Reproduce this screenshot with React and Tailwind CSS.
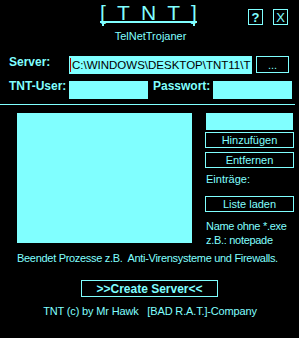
import React from 'react'

const cyan = 'bg-[#80ffff]'

function Btn({ children, className = '' }) {
  return (
    <div className={`border border-[#80ffff] flex items-center justify-center text-[11px] leading-[12px] text-[#80ffff] ${className}`}>
      {children}
    </div>
  )
}

function App() {
  return (
    <div className="w-[299px] h-[338px] bg-black text-[#80ffff] font-['Liberation_Sans',Arial,sans-serif] overflow-hidden">
      {/* Header */}
      <div className="grid grid-cols-[100px_97px_1fr] h-[30px]">
        <div />
        <div className="pt-[4px]">
          <div className="flex justify-between h-[17px] text-[21px] leading-[17px] border-b-2 border-[#80ffff] box-content">
            <span>[</span>
            <span>T</span>
            <span>N</span>
            <span>T</span>
            <span>]</span>
          </div>
          <div className="h-[3px] border-x-2 border-[#80ffff] mx-[2px]" />
        </div>
        <div className="flex justify-end gap-[10px] pr-[11px] pt-[9px]">
          <div className="w-[15px] h-[16px] border border-[#80ffff] flex items-center justify-center text-[13px] leading-none font-bold">?</div>
          <div className="w-[15px] h-[16px] border border-[#80ffff] flex items-center justify-center text-[13px] leading-none">X</div>
        </div>
      </div>

      <div className="text-center text-[11px] leading-[12px] pl-[2px]">TelNetTrojaner</div>

      {/* Server row */}
      <div className="flex items-start mt-[14px] h-[18px] pl-[9px]">
        <div className="w-[60px] text-[12px] leading-[12px] font-bold">Server:</div>
        <div className={`w-[183px] h-[18px] ${cyan} flex items-center overflow-hidden whitespace-nowrap text-black text-[11.5px] leading-[14px]`}>
          <span className="w-px h-[14px] bg-[#b00000] ml-[1px] shrink-0" />
          <span className="ml-[1px]">C:\WINDOWS\DESKTOP\TNT11\T</span>
        </div>
        <Btn className="ml-[4px] w-[33px] h-[17px]">...</Btn>
      </div>

      {/* User row */}
      <div className="flex items-start mt-[7px] h-[18px] pl-[9px]">
        <div className="w-[60px] text-[12px] leading-[12px] font-bold -mt-[1px]">TNT-User:</div>
        <div className={`w-[79px] h-[18px] ${cyan}`} />
        <div className="ml-[5px] w-[60px] text-[12px] leading-[12px] font-bold -mt-[1px]">Passwort:</div>
        <div className={`w-[79px] h-[18px] ${cyan}`} />
      </div>

      <div className={`mt-[5px] w-[295px] h-px ${cyan}`} />

      {/* List section */}
      <div className="flex items-start mt-[8px]">
        <div className={`ml-[17px] w-[175px] h-[130px] ${cyan}`} />
        <div className="ml-[13px] w-[89px] flex flex-col">
          <div className={`mx-[1px] h-[17px] ${cyan}`} />
          <Btn className="mt-[2px] h-[16px]">Hinzufügen</Btn>
          <Btn className="mt-[4px] h-[16px]">Entfernen</Btn>
          <div className="mt-[5px] text-[11px] leading-[12px] pl-[1px]">Einträge:</div>
          <Btn className="mt-[11px] h-[16px]">Liste laden</Btn>
          <div className="mt-[7px] text-[11px] leading-[14px] pl-[1px] whitespace-nowrap tracking-[-0.3px]">
            <div>Name ohne *.exe</div>
            <div>z.B.: notepade</div>
          </div>
        </div>
      </div>

      <div className="mt-[5px] pl-[17px] text-[11px] leading-[12px] whitespace-pre tracking-[-0.3px]">
        Beendet Prozesse z.B.  Anti-Virensysteme und Firewalls.
      </div>

      <div className="mt-[16px] ml-[81px] w-[137px] h-[17px] border border-[#80ffff] flex items-center justify-center text-[12px] leading-[12px] font-bold">
        {'>>Create Server<<'}
      </div>

      <div className="mt-[8px] text-center text-[11px] leading-[12px] whitespace-pre pl-[1px] tracking-[-0.15px]">
        TNT (c) by Mr Hawk   [BAD R.A.T.]-Company
      </div>
    </div>
  )
}

export default App
